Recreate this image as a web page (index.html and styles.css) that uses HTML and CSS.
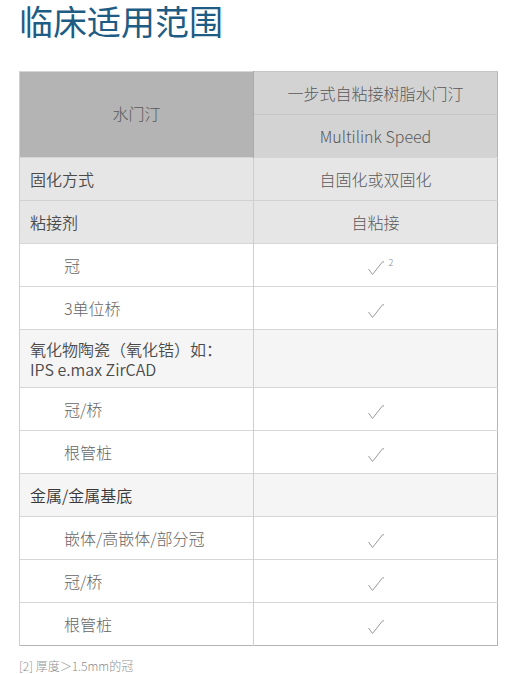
FILE: index.html
```html
<!DOCTYPE html>
<html lang="zh-CN">
<head>
<meta charset="utf-8">
<link rel="stylesheet" href="styles.css">
</head>
<body>
<div class="page">
  <h1 class="title">临床适用范围</h1>
  <table class="spec">
    <colgroup><col class="c1"><col class="c2"></colgroup>
    <tr class="head">
      <th class="hl" rowspan="2">水门汀</th>
      <th class="hr">一步式自粘接树脂水门汀</th>
    </tr>
    <tr class="head">
      <th class="hr">Multilink Speed</th>
    </tr>
    <tr class="gray"><td class="top">固化方式</td><td class="ctr">自固化或双固化</td></tr>
    <tr class="gray"><td class="top">粘接剂</td><td class="ctr">自粘接</td></tr>
    <tr><td class="sub">冠</td><td class="ctr"><span class="chk"><svg width="16" height="14" viewBox="0 0 16 14"><polyline points="0.5,8 4.5,13.5 14.5,0.8 16,0.8" fill="none" stroke="#9a9a9a" stroke-width="1"/></svg><sup class="fn">2</sup></span></td></tr>
    <tr><td class="sub">3单位桥</td><td class="ctr"><span class="chk"><svg width="16" height="14" viewBox="0 0 16 14"><polyline points="0.5,8 4.5,13.5 14.5,0.8 16,0.8" fill="none" stroke="#9a9a9a" stroke-width="1"/></svg></span></td></tr>
    <tr class="light"><td class="top tall">氧化物陶瓷（氧化锆）如：<br>IPS e.max ZirCAD</td><td></td></tr>
    <tr><td class="sub">冠/桥</td><td class="ctr"><span class="chk"><svg width="16" height="14" viewBox="0 0 16 14"><polyline points="0.5,8 4.5,13.5 14.5,0.8 16,0.8" fill="none" stroke="#9a9a9a" stroke-width="1"/></svg></span></td></tr>
    <tr><td class="sub">根管桩</td><td class="ctr"><span class="chk"><svg width="16" height="14" viewBox="0 0 16 14"><polyline points="0.5,8 4.5,13.5 14.5,0.8 16,0.8" fill="none" stroke="#9a9a9a" stroke-width="1"/></svg></span></td></tr>
    <tr class="light"><td class="top strong">金属/金属基底</td><td></td></tr>
    <tr><td class="sub">嵌体/高嵌体/部分冠</td><td class="ctr"><span class="chk"><svg width="16" height="14" viewBox="0 0 16 14"><polyline points="0.5,8 4.5,13.5 14.5,0.8 16,0.8" fill="none" stroke="#9a9a9a" stroke-width="1"/></svg></span></td></tr>
    <tr><td class="sub">冠/桥</td><td class="ctr"><span class="chk"><svg width="16" height="14" viewBox="0 0 16 14"><polyline points="0.5,8 4.5,13.5 14.5,0.8 16,0.8" fill="none" stroke="#9a9a9a" stroke-width="1"/></svg></span></td></tr>
    <tr><td class="sub">根管桩</td><td class="ctr"><span class="chk"><svg width="16" height="14" viewBox="0 0 16 14"><polyline points="0.5,8 4.5,13.5 14.5,0.8 16,0.8" fill="none" stroke="#9a9a9a" stroke-width="1"/></svg></span></td></tr>
  </table>
  <p class="note">[2] 厚度＞1.5mm的冠</p>
</div>
</body>
</html>
```
FILE: styles.css
```css
html, body {
  margin: 0;
  padding: 0;
  background: #ffffff;
}
.page {
  padding: 0 33px 0 19px;
  font-family: "Noto Sans CJK SC", "Noto Sans", sans-serif;
  color: #595959;
}
.title {
  margin: 0;
  padding-top: 0;
  font-size: 34px;
  line-height: 42px;
  font-weight: 400;
  color: #1e5c84;
  height: 71px;
}
.spec {
  width: 478px;
  border-collapse: collapse;
  border: 1px solid #b5b5b5;
  table-layout: fixed;
  font-size: 16px;
  font-weight: 300;
}
.c1 { width: 234px; }
.c2 { width: 244px; }
.spec th, .spec td {
  height: 42px;
  padding: 0 10px;
  border-top: 1px solid #d6d6d6;
  border-left: 1px solid #cfcfcf;
  text-align: left;
  font-weight: 300;
  line-height: 20px;
  vertical-align: middle;
}
.spec th.hl {
  background: #b4b4b4;
  text-align: center;
  border-right: 1px solid #a9a9a9;
  padding-bottom: 4px;
}
.spec th.hr {
  background: #d3d3d3;
  text-align: center;
  border-top: 1px solid #c6c6c6;
}
.gray td { background: #e6e6e6; }
.gray + .gray td { border-top-color: #d2d2d2; }
.light td { background: #f5f5f5; }
.spec td.top { color: #4a4a4a; font-weight: 350; }
.spec td.strong { color: #383838; }
.spec td.sub { padding-left: 44px; color: #666666; }
.spec td.ctr { text-align: center; }
.spec td.tall { height: 57px; }
.chk {
  position: relative;
  display: inline-block;
  width: 16px;
  height: 14px;
  vertical-align: middle;
}
.chk svg { display: block; }
.fn {
  position: absolute;
  left: 21px;
  top: -3px;
  font-size: 9px;
  line-height: 10px;
  color: #8a8a8a;
}
.note {
  margin: 12px 0 0;
  font-size: 12px;
  line-height: 16px;
  font-weight: 300;
  color: #8f8f8f;
}
```
